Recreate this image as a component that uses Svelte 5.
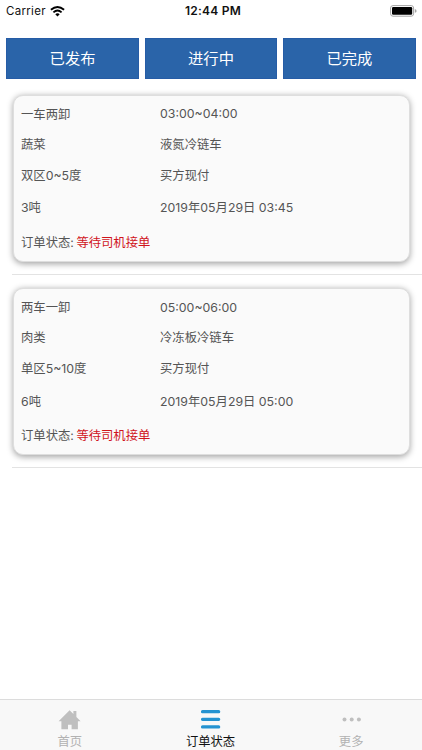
<script>
  const filters = ['已发布', '进行中', '已完成'];
  const orders = [
    { rows: [['一车两卸', '03:00~04:00'], ['蔬菜', '液氮冷链车'], ['双区0~5度', '买方现付'], ['3吨', '2019年05月29日 03:45']], status: '等待司机接单' },
    { rows: [['两车一卸', '05:00~06:00'], ['肉类', '冷冻板冷链车'], ['单区5~10度', '买方现付'], ['6吨', '2019年05月29日 05:00']], status: '等待司机接单' }
  ];
</script>

<div class="screen">
  <header class="status-bar">
    <div class="carrier">
      <span>Carrier</span>
      <svg width="15" height="11" viewBox="0 0 15 11">
        <path d="M7.5 10.6 L5.3 8.2 Q7.5 6.3 9.7 8.2Z" fill="#000" />
        <path d="M3.4 6.4 Q7.5 2.8 11.6 6.4" fill="none" stroke="#000" stroke-width="1.9" />
        <path d="M0.9 3.8 Q7.5 -1.8 14.1 3.8" fill="none" stroke="#000" stroke-width="1.9" />
      </svg>
    </div>
    <span class="time">12:44 PM</span>
    <svg class="battery" width="27" height="12" viewBox="0 0 27 12">
      <rect x="0.6" y="0.6" width="23" height="10.6" rx="2.4" fill="#fff" stroke="#a4a4a4" stroke-width="1" />
      <rect x="2" y="2" width="20.2" height="7.8" rx="1.2" fill="#000" />
      <path d="M24.8 4 Q26.6 4.4 26.6 5.9 Q26.6 7.4 24.8 7.8Z" fill="#a4a4a4" />
    </svg>
  </header>

  <nav class="filters">
    {#each filters as label}
      <button>{label}</button>
    {/each}
  </nav>

  <main>
    {#each orders as order}
      <section class="item">
        <article class="card">
          {#each order.rows as [left, right]}
            <div class="row"><span>{left}</span><span>{right}</span></div>
          {/each}
          <div class="row state">订单状态:<em>{order.status}</em></div>
        </article>
      </section>
    {/each}
  </main>

  <footer class="tabs">
    <div class="tab">
      <svg width="24" height="22" viewBox="0 0 24 22">
        <path d="M12 1.2 L15.8 5 V2 H18.8 V8 L23 12.2 H20.3 V20.2 H14 V15.8 H10.4 V20.2 H3.8 V12.2 H1 Z" fill="#bfbfbf" />
      </svg>
      <span>首页</span>
    </div>
    <div class="tab active">
      <svg width="24" height="22" viewBox="0 0 24 22">
        <path d="M3.9 2.7H20.1M3.9 10.3H20.1M3.9 17.9H20.1" stroke="#2593d1" stroke-width="3.2" stroke-linecap="round" />
      </svg>
      <span>订单状态</span>
    </div>
    <div class="tab">
      <svg width="24" height="22" viewBox="0 0 24 22" fill="#bfbfbf">
        <circle cx="4.9" cy="10.5" r="2" /><circle cx="12.1" cy="10.5" r="2" /><circle cx="19.3" cy="10.5" r="2" />
      </svg>
      <span>更多</span>
    </div>
  </footer>
</div>

<style>
  .screen {
    height: 750px;
    display: flex;
    flex-direction: column;
    background: #fff;
    overflow: hidden;
    font-family: Inter, "Noto Sans CJK SC", sans-serif;
    box-sizing: border-box;
  }
  .status-bar {
    height: 22px;
    flex: none;
    display: grid;
    grid-template-columns: 1fr auto 1fr;
    align-items: center;
    padding: 0 5px 0 6px;
    font-size: 11.5px;
    color: #111;
    letter-spacing: 0.3px;
  }
  .carrier { display: flex; align-items: center; gap: 4.5px; }
  .time { font-weight: 600; font-size: 12px; line-height: 20px; padding-left: 3px; letter-spacing: 0.25px; }
  .battery { justify-self: end; }
  .filters {
    flex: none;
    display: grid;
    grid-template-columns: repeat(3, 1fr);
    gap: 6px;
    padding: 16px 6.3px 0;
  }
  .filters button {
    height: 41px;
    border: 1px solid #265ca6;
    border-radius: 0;
    padding: 0;
    background: #2a64a9;
    color: #fff;
    font: 15.3px/39px Inter, "Noto Sans CJK SC", sans-serif;
  }
  main { flex: 1; }
  .item {
    height: 193.5px;
    box-sizing: border-box;
    margin-left: 12px;
    padding: 15.5px 12.5px 0 1px;
    border-bottom: 1px solid #e3e3e3;
  }
  main .item:first-child { height: 195.5px; }
  main .item:not(:first-child) { padding-top: 13.5px; }
  .card {
    height: 167px;
    box-sizing: border-box;
    border-radius: 10px;
    background: #fafafa;
    border: 1px solid #dedede;
    box-shadow: 0 1.5px 6px rgba(0, 0, 0, 0.36);
    padding: 3.4px 7px 0;
    display: grid;
    grid-template-rows: 29.5px 30.5px 32px 33px 36px;
    color: #555;
    font-size: 12.33px;
  }
  .row { display: grid; grid-template-columns: 139px 1fr; align-items: center; white-space: nowrap; }
  .state { display: flex; gap: 2.5px; }
  em { font-style: normal; color: #d0141c; }
  .tabs {
    height: 51px;
    flex: none;
    box-sizing: border-box;
    border-top: 1px solid #dcdcdc;
    background: #f8f8f8;
    display: grid;
    grid-template-columns: repeat(3, 1fr);
  }
  .tab {
    display: flex;
    flex-direction: column;
    align-items: center;
    padding-top: 9px;
    color: #b2b2b2;
    font-size: 12.3px;
    line-height: 22px;
  }
  .tab svg { flex: none; transform: translateX(-0.4px); }
  .tab span { margin-left: -1px; }
  .active { color: #111; }
</style>
